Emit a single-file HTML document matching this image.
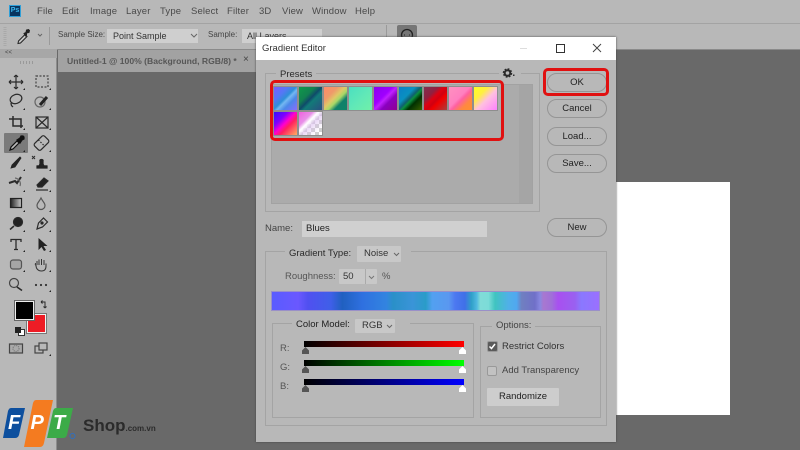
<!DOCTYPE html>
<html><head><meta charset="utf-8">
<style>
html,body{margin:0;padding:0;width:800px;height:450px;overflow:hidden;background:#696969;font-family:"Liberation Sans",sans-serif;font-size:9.5px;color:#2a2a2a}
.a{position:absolute;white-space:nowrap}
.m{top:6px;font-size:9.5px;color:#4a4a4a;letter-spacing:.15px}
.btn{position:absolute;left:547px;width:58px;border:1px solid #959595;border-radius:10px;text-align:center;font-size:9.5px;color:#222;box-sizing:content-box}
.sw{position:absolute;width:23px;height:23px;outline:1px solid #8e8e8e}
.hd{position:absolute;background:#b8b8b8;padding:0 4px}
</style></head><body>
<!-- menu / options -->
<div class="a" style="left:0;top:0;width:800px;height:23px;background:#b8b8b8;border-bottom:1px solid #a3a3a3"></div>
<div class="a" style="left:0;top:24px;width:800px;height:25px;background:#b8b8b8;border-bottom:1px solid #8a8a8a"></div>
<div class="a" style="left:9px;top:5px;width:10px;height:10px;background:#0a3560;border:1px solid #2f9fd8;color:#3ab8f0;font-size:7px;font-weight:bold;line-height:10px;text-align:center">Ps</div>
<div class="a m" style="left:37px">File</div><div class="a m" style="left:62px">Edit</div><div class="a m" style="left:90px">Image</div><div class="a m" style="left:126px">Layer</div><div class="a m" style="left:160px">Type</div><div class="a m" style="left:191px">Select</div><div class="a m" style="left:227px">Filter</div><div class="a m" style="left:259px">3D</div><div class="a m" style="left:282px">View</div><div class="a m" style="left:312px">Window</div><div class="a m" style="left:355px">Help</div>
<svg class="a" style="left:0;top:24px" width="60" height="24"><path d="M18.500 17l6.500-6.500 2 2-6.500 6.500-2.500.5z" fill="#c5c5c5" stroke="#222"/><path d="M24 9.500l2-1 .5-2.500 2-.5 1 1-.5 2-2.500.5 0 2-1 1z" fill="#222" stroke="#222"/><path d="M38 10l2 2 2-2" fill="none" stroke="#666"/><path d="M49.500 3v18" stroke="#9a9a9a"/><path d="M5 3v20" stroke="#a9a9a9" stroke-dasharray="1 1" stroke-width="3"/></svg>
<div class="a" style="left:58px;top:30px;color:#444;font-size:8px">Sample Size:</div>
<div class="a" style="left:107px;top:29px;width:91px;height:14px;background:#cfcfcf;line-height:14px;text-indent:6px;color:#333;font-size:9px">Point Sample</div>
<svg class="a" style="left:190px;top:33px" width="8" height="6"><path d="M1 1l3 3 3-3" fill="none" stroke="#666"/></svg>
<div class="a" style="left:208px;top:30px;color:#444;font-size:8px">Sample:</div>
<div class="a" style="left:242px;top:29px;width:80px;height:14px;background:#cfcfcf;line-height:14px;text-indent:5px;color:#333;font-size:9px">All Layers</div>
<div class="a" style="left:386px;top:25px;width:1px;height:12px;background:#9a9a9a"></div>
<div class="a" style="left:397px;top:25px;width:20px;height:20px;background:#767676;border-radius:2px"></div>
<svg class="a" style="left:400px;top:28px" width="14" height="14"><circle cx="7" cy="7" r="5.500" fill="none" stroke="#222" stroke-width="1.300"/><path d="M4 7h1M9 7h1" stroke="#222"/></svg>
<!-- toolbar -->
<div class="a" style="left:0;top:49px;width:57px;height:401px;background:#b8b8b8;border-right:1px solid #8d8d8d;box-sizing:border-box"></div>
<div class="a" style="left:0;top:49px;width:57px;height:9px;background:#a7a7a7;font-size:6px;line-height:8px;color:#444;text-indent:5px">&lt;&lt;</div>
<div class="a" style="left:20px;top:61px;width:14px;height:3px;background:repeating-linear-gradient(90deg,#999 0 1px,transparent 1px 3px)"></div>
<!-- doc tab -->
<div class="a" style="left:58px;top:50px;width:198px;height:22px;background:#a2a2a2"></div>
<div class="a" style="left:67px;top:56px;font-size:8.6px;font-weight:bold;color:#565656">Untitled-1 @ 100% (Background, RGB/8) *</div>
<div class="a" style="left:243px;top:54px;font-size:10px;color:#444">×</div>
<div class="a" style="left:256px;top:49px;width:544px;height:1px;background:#8a8a8a"></div>
<!-- tool icons -->
<svg class="a" style="left:0;top:66px" width="57" height="320" fill="none" stroke="#2a2a2a" stroke-width="1.200">
<rect x="4" y="67" width="24" height="20" fill="#7b7b7b" stroke="none" rx="1"/>
<path d="M16 9v14M9 16h14M16 9l-2 2M16 9l2 2M16 23l-2-2M16 23l2-2M9 16l2-2M9 16l2 2M23 16l-2-2M23 16l-2 2"/>
<rect x="36" y="10" width="12" height="11" stroke-dasharray="2 1.500" stroke="#444"/>
<ellipse cx="16" cy="33" rx="6" ry="4.500" transform="rotate(-20 16 33)"/><path d="M11 37c0 3 1 3 2 4"/>
<circle cx="40" cy="36" r="5" stroke="#666"/><path d="M40 39l7-8" stroke="#222" stroke-width="3"/>
<path d="M13 50v10h10M9 53h12v9" stroke-width="1.500"/>
<rect x="36" y="51" width="12" height="11"/><path d="M36 51l12 11M48 51l-12 11"/>
<!-- eyedropper -->
<path d="M10 84l1-3 6-6 2 2-6 6z" fill="#bbb" stroke="#111"/><path d="M17 74l3-2 1-2 2-0 1 1 0 2-2 1-2 3z" fill="#111" stroke="#111"/>
<!-- heal -->
<g transform="rotate(45 41.500 77)"><rect x="37" y="70" width="9" height="14" rx="2"/><path d="M37 77h9" stroke-dasharray="1.500 1.500"/></g>
<!-- brush -->
<path d="M11 102l1-3 8-8 1 1-6 9z" fill="#222" stroke="#222" stroke-width=".8"/>
<!-- stamp -->
<path d="M37 102h10v-2h-3l-1-2v-3c1-2-4-2-3 0v3l-1 2h-2z" fill="#222" stroke="#222"/><path d="M37 100h10" stroke="#222"/><path d="M32 90l3 3M35 90l-3 3" stroke-width="1"/>
<!-- mixer -->
<path d="M9 117l6-2 2 2 4-6" stroke-width="2"/><path d="M15 112a6 6 0 0 1 5 8" stroke="#666"/>
<!-- eraser -->
<path d="M37 119l7-7 4 3-6 6h-4z" fill="#222"/><path d="M36 124h12"/>
<!-- gradient -->
<defs><linearGradient id="g1"><stop offset="0" stop-color="#222"/><stop offset="1" stop-color="#ccc"/></linearGradient></defs>
<rect x="10.500" y="132.500" width="11" height="9" fill="url(#g1)" stroke="#222"/>
<path d="M41 132c-2 4-4 5-4 7.500a4 4 0 0 0 8 0c0-2.500-2-3.500-4-7.500z" stroke="#555"/>
<!-- dodge / pen -->
<circle cx="18" cy="156" r="4.500" fill="#222"/><path d="M14 160l-4 3.500" stroke-width="1.500"/>
<path d="M37 163l1.500-6 5-5 4 4-5 5z"/><circle cx="42" cy="157" r="1" fill="#222"/>
<!-- type / arrow -->
<path d="M11 176v-2.500h10v2.500M16 173.500v10M14 183.500h4" stroke-width="1.300"/>
<path d="M38.500 172v12l3-3 2.500 4 2-1-2.500-4h4z" fill="#222" stroke="none"/>
<!-- rect / hand -->
<rect x="10.500" y="194" width="11" height="9" rx="2.500" stroke="#555" fill="#a5a5a5"/>
<path d="M37 199v-4M39 199v-5.500M41.500 199v-6M44 199v-5M46 200v-2.500M36 197.500c-1 0-1 1 0 2 0 3 2 5.500 5.500 5.500 3 0 4.500-2 4.500-5" stroke="#333" stroke-width="1"/>
<!-- zoom / dots -->
<circle cx="14" cy="217" r="4.500" stroke="#444"/><path d="M17 221l5 3.500" stroke-width="1.600"/>
<circle cx="36" cy="219" r="1.100" fill="#333" stroke="none"/><circle cx="41" cy="219" r="1.100" fill="#333" stroke="none"/><circle cx="46" cy="219" r="1.100" fill="#333" stroke="none"/>
<!-- swap -->
<path d="M41 236h4v5M45 242l-1.500-1.500M45 242l1.500-1.500M41 236l1.500-1.500M41 236l1.500 1.500" stroke-width="1"/>
<rect x="9.500" y="278" width="13" height="9" stroke="#444" fill="#aaa"/><circle cx="16" cy="282.500" r="3" stroke="#777" stroke-dasharray="1 1"/>
<rect x="35" y="280" width="8" height="7" stroke="#444"/><rect x="39" y="277" width="8" height="7" stroke="#444" fill="#b8b8b8"/>
</svg>
<svg class="a" style="left:0;top:66px" width="57" height="320" fill="#222"><path d="M25 22v2h-2zM51 22v2h-2zM25 42v2h-2zM51 42v2h-2zM25 62v2h-2zM51 62v2h-2zM25 84v2h-2zM51 84v2h-2zM25 103v2h-2zM51 103v2h-2zM25 124v2h-2zM51 124v2h-2zM25 144v2h-2zM51 144v2h-2zM25 164v2h-2zM51 164v2h-2zM25 184v2h-2zM51 184v2h-2zM25 204v2h-2zM51 204v2h-2zM51 224v2h-2zM51 288v2h-2z"/></svg>
<div class="a" style="left:27px;top:314px;width:17px;height:17px;background:#ee1c25;border:1px solid #f2f2f2;outline:1px solid #777"></div>
<div class="a" style="left:15px;top:301px;width:17px;height:17px;background:#000;border:1px solid #eee;outline:1px solid #666"></div>
<div class="a" style="left:18px;top:329px;width:5px;height:5px;background:#fff;border:1px solid #333"></div>
<div class="a" style="left:15px;top:327px;width:6px;height:6px;background:#222"></div>
<!-- canvas doc -->
<div class="a" style="left:600px;top:182px;width:130px;height:233px;background:#fff"></div>
<!-- dialog -->
<div class="a" style="left:256px;top:37px;width:360px;height:405px;background:#b8b8b8;box-shadow:0 0 2px #444"></div>
<div class="a" style="left:256px;top:37px;width:360px;height:23px;background:#fff"></div>
<div class="a" style="left:262px;top:43px;font-size:9.5px;color:#333">Gradient Editor</div>
<div class="a" style="left:520px;top:48px;width:7px;height:1px;background:#ddd"></div>
<div class="a" style="left:556px;top:44px;width:7px;height:7px;border:1px solid #333"></div>
<svg class="a" style="left:592px;top:43px" width="10" height="10"><path d="M1 1l8 8M9 1l-8 8" stroke="#444" fill="none"/></svg>
<!-- presets -->
<div class="a" style="left:265px;top:73px;width:273px;height:137px;border:1px solid #a4a4a4"></div>
<div class="hd" style="left:276px;top:69px;font-size:9.5px;line-height:11px">Presets</div>
<div class="hd" style="left:499px;top:68px;width:14px;height:11px"></div>
<svg class="a" style="left:502px;top:68px" width="14" height="11"><circle cx="5.500" cy="5" r="2.800" fill="none" stroke="#2a2a2a" stroke-width="2"/><circle cx="5.500" cy="5" r="4" fill="none" stroke="#2a2a2a" stroke-width="1.500" stroke-dasharray="1.800 1.340"/><rect x="11" y="6.500" width="1.500" height="1.500" fill="#333"/></svg>
<div class="a" style="left:272px;top:85px;width:260px;height:118px;background:#ababab;outline:1px solid #a2a2a2"></div>
<div class="a" style="left:519px;top:85px;width:13px;height:118px;background:#a5a5a5"></div>
<div class="sw" style="left:274px;top:87px;background:linear-gradient(135deg,#7a5cff 0,#5577f5 30%,#2f8fd8 48%,#74b8f2 56%,#4b88e8 70%,#8a6cff 100%)"></div>
<div class="sw" style="left:299px;top:87px;background:linear-gradient(135deg,#0f9a4a 0,#128050 35%,#0f4a6a 50%,#127a78 60%,#2a4f80 100%)"></div>
<div class="sw" style="left:324px;top:87px;background:linear-gradient(135deg,#ff8a68 0,#ee9a6a 30%,#e0c868 46%,#a8d868 58%,#10806a 72%,#0f8468 100%)"></div>
<div class="sw" style="left:349px;top:87px;background:linear-gradient(135deg,#4adfc0,#60e8b8 50%,#70f0a8)"></div>
<div class="sw" style="left:374px;top:87px;background:linear-gradient(135deg,#8a00f0 0,#a000ff 40%,#c020ff 50%,#8a00c0 65%,#900090 100%)"></div>
<div class="sw" style="left:399px;top:87px;background:linear-gradient(135deg,#0a80c8 0,#0a90c0 35%,#106070 48%,#0a9040 55%,#003000 68%,#3a6000 100%)"></div>
<div class="sw" style="left:424px;top:87px;background:linear-gradient(135deg,#80304f 0,#902040 30%,#e00010 45%,#d00010 55%,#f00000 65%,#a84040 100%)"></div>
<div class="sw" style="left:449px;top:87px;background:linear-gradient(135deg,#ff90c0 0,#ff80c0 45%,#ff60a0 55%,#ff8840 75%,#ff9030 100%)"></div>
<div class="sw" style="left:474px;top:87px;background:linear-gradient(135deg,#ffff20 0,#fff040 30%,#ffc0e0 55%,#ff80ff 100%)"></div>
<div class="sw" style="left:274px;top:112px;background:linear-gradient(135deg,#3010ff 0,#8000ff 30%,#ff00d0 48%,#ff2060 62%,#ffb060 100%)"></div>
<div class="sw" style="left:299px;top:112px;background:linear-gradient(135deg,#f060e0 0,#e890e8 30%,#fff 42%,rgba(220,190,240,.6) 55%,rgba(255,255,255,0) 85%),repeating-conic-gradient(#cfcfcf 0 25%,#fff 0 50%) 0 0/8px 8px"></div>
<div class="a" style="left:270px;top:80px;width:228px;height:55px;border:3px solid #e01010;border-radius:5px"></div>
<!-- buttons -->
<div class="btn" style="top:73px;height:17px;line-height:17px">OK</div>
<div class="a" style="left:543px;top:68px;width:60px;height:22px;border:3px solid #e01010;border-radius:5px"></div>
<div class="btn" style="top:99px;height:17px;line-height:17px">Cancel</div>
<div class="btn" style="top:127px;height:17px;line-height:17px">Load...</div>
<div class="btn" style="top:154px;height:17px;line-height:17px">Save...</div>
<div class="btn" style="top:218px;height:17px;line-height:17px">New</div>
<!-- name -->
<div class="a" style="left:265px;top:223px;color:#444">Name:</div>
<div class="a" style="left:302px;top:221px;width:185px;height:16px;background:#d0d0d0;line-height:16px;text-indent:4px;color:#222">Blues</div>
<!-- gradient group -->
<div class="a" style="left:265px;top:251px;width:340px;height:173px;border:1px solid #a4a4a4"></div>
<div class="hd" style="left:285px;top:247px;height:14px;padding-right:60px;line-height:14px;color:#2a2a2a">Gradient Type:</div>
<div class="a" style="left:357px;top:246px;width:44px;height:16px;background:#c8c8c8;line-height:16px;text-indent:7px;color:#333;border-radius:1px">Noise</div>
<svg class="a" style="left:393px;top:252px" width="7" height="5"><path d="M1 1l2.500 2.500L6 1" fill="none" stroke="#666"/></svg>
<div class="a" style="left:285px;top:271px;color:#555">Roughness:</div>
<div class="a" style="left:339px;top:269px;width:38px;height:15px;background:#c8c8c8;line-height:15px;text-indent:4px;color:#333;border-radius:1px">50</div>
<div class="a" style="left:365px;top:269px;width:1px;height:15px;background:#aaa"></div>
<svg class="a" style="left:368px;top:275px" width="7" height="5"><path d="M1 1l2.500 2.500L6 1" fill="none" stroke="#777"/></svg>
<div class="a" style="left:382px;top:271px;color:#555">%</div>
<div class="a" style="left:271px;top:291px;width:329px;height:20px;box-sizing:border-box;border:1px solid #9a90c8;background:linear-gradient(90deg,#5a5cff 0,#6a58ff 8%,#5050f0 11%,#3f5fe8 18%,#2060c0 21.5%,#2f70e0 27.6%,#3284e0 35%,#2a90c8 37%,#3a94d8 43%,#2a9cc8 47%,#52a0f0 49%,#5a98f0 54%,#4c78f0 56%,#4070e8 59%,#30a0c8 61%,#50b8e0 62.600%,#80dcd8 63.700%,#7cdcd8 66.200%,#40c4c0 68.200%,#50b0e8 72.300%,#50a8f0 74.800%,#7080c0 76.300%,#7070c8 80.400%,#8888e0 82%,#a878d0 83%,#a070d8 85.500%,#a850f0 87.500%,#9a60f0 92.600%,#8a78ff 94.600%,#9a70ff 100%)"></div>
<!-- color model -->
<div class="a" style="left:272px;top:323px;width:200px;height:93px;border:1px solid #a4a4a4"></div>
<div class="hd" style="left:292px;top:318px;height:14px;padding-right:60px;line-height:14px;color:#222">Color Model:</div>
<div class="a" style="left:355px;top:319px;width:40px;height:14px;background:#c8c8c8;line-height:14px;text-indent:7px;color:#333;border-radius:1px">RGB</div>
<svg class="a" style="left:386px;top:324px" width="7" height="5"><path d="M1 1l2.500 2.500L6 1" fill="none" stroke="#666"/></svg>
<div class="a" style="left:280px;top:343px;color:#555">R:</div>
<div class="a" style="left:280px;top:362px;color:#555">G:</div>
<div class="a" style="left:280px;top:381px;color:#555">B:</div>
<div class="a" style="left:304px;top:341px;width:160px;height:6px;background:linear-gradient(90deg,#000,#ff0000)"></div>
<div class="a" style="left:304px;top:360px;width:160px;height:6px;background:linear-gradient(90deg,#000,#00ff00)"></div>
<div class="a" style="left:304px;top:379px;width:160px;height:6px;background:linear-gradient(90deg,#000,#0000ff)"></div>
<svg class="a" style="left:300px;top:347px" width="170" height="50"><g fill="#555"><path d="M5.500 0l3.500 3.500V7H2V3.500z"/><path d="M5.500 19l3.500 3.500V26H2v-3.500z"/><path d="M5.500 38l3.500 3.500V45H2v-3.500z"/></g><g fill="#fff"><path d="M162.500 0l3.500 3.500V7h-7V3.500z"/><path d="M162.500 19l3.500 3.500V26h-7v-3.500z"/><path d="M162.500 38l3.500 3.500V45h-7v-3.500z"/></g></svg>
<!-- options -->
<div class="a" style="left:480px;top:326px;width:119px;height:90px;border:1px solid #a4a4a4"></div>
<div class="hd" style="left:492px;top:320px;height:12px;line-height:12px;color:#444">Options:</div>
<div class="a" style="left:487px;top:341px;width:9px;height:9px;background:#5a5a5a;border:1px solid #999;border-radius:2px"></div>
<svg class="a" style="left:488px;top:342px" width="9" height="9"><path d="M1.500 4.500l2 2 3.500-4.500" fill="none" stroke="#fff" stroke-width="1.500"/></svg>
<div class="a" style="left:502px;top:341px;color:#333">Restrict Colors</div>
<div class="a" style="left:487px;top:366px;width:8px;height:8px;background:#c2c2c2;border:1px solid #999;border-radius:2px"></div>
<div class="a" style="left:502px;top:365px;color:#444">Add Transparency</div>
<div class="a" style="left:487px;top:388px;width:72px;height:18px;background:#cdcdcd;line-height:18px;text-align:center;color:#222;border-radius:1px">Randomize</div>
<!-- logo -->
<svg class="a" style="left:0;top:395px" width="80" height="55">
<path d="M11 13H25L19 40Q18 43 15 43H3L8 16Q9 13 11 13z" fill="#0d4f9e"/>
<path d="M36 5H53L44 48Q43 52 40 52H24L33 8Q34 5 36 5z" fill="#f47b20"/>
<path d="M56 13H73L67 40Q66 43 63 43H47L53 16Q54 13 56 13z" fill="#3cab48"/>
<text x="8" y="34" font-family="Liberation Sans" font-size="20" font-weight="bold" font-style="italic" fill="#fff">F</text>
<text x="30.500" y="34" font-family="Liberation Sans" font-size="20" font-weight="bold" font-style="italic" fill="#fff">P</text>
<text x="53" y="34" font-family="Liberation Sans" font-size="20" font-weight="bold" font-style="italic" fill="#fff">T</text>
<circle cx="72.500" cy="41" r="2.500" fill="none" stroke="#2f6fc0"/>
</svg>
<div class="a" style="left:83px;top:416px;font-size:17px;font-weight:bold;color:#2b2b2b">Shop<span style="font-size:8px">.com.vn</span></div>
</body></html>
